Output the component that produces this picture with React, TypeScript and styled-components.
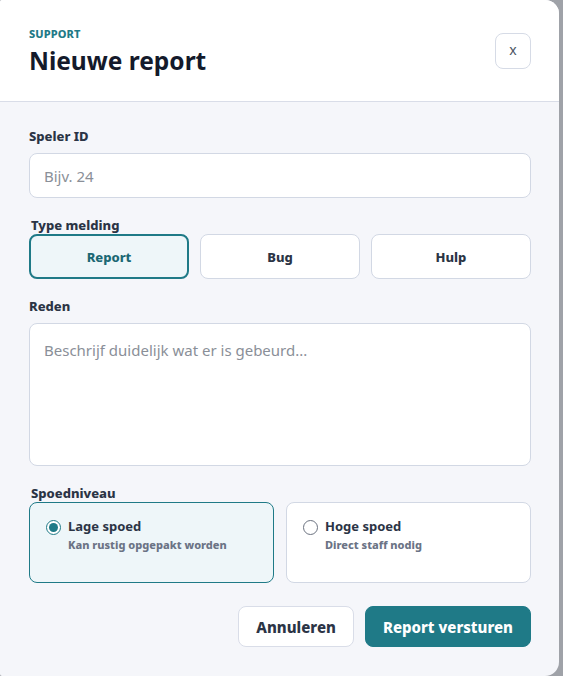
import React, { useState } from "react";
import styled, { createGlobalStyle } from "styled-components";

const Global = createGlobalStyle`
  html, body { margin: 0; padding: 0; background: #9fa2a8; }
  body { font-family: "Noto Sans", "Open Sans", sans-serif; }
  * { box-sizing: border-box; }
`;

const Modal = styled.div`
  width: 559px;
  height: 676px;
  background: #f5f6fa;
  border-radius: 2px 14px 14px 2px;
  overflow: hidden;
  display: flex;
  flex-direction: column;
`;

const Header = styled.header`
  height: 102px;
  background: #ffffff;
  border-bottom: 1px solid #d9dde8;
  padding: 26px 28px 0 29px;
  display: flex;
  justify-content: space-between;
  align-items: flex-start;
`;

const Eyebrow = styled.div`
  font-size: 11px;
  font-weight: 800;
  letter-spacing: 0.1px;
  color: #1f7a87;
  line-height: 16px;
`;

const Title = styled.h1`
  margin: 2px 0 0;
  font-size: 24.5px;
  font-weight: 700;
  color: #141a2b;
  line-height: 34px;
`;

const CloseButton = styled.button`
  margin-top: 7px;
  width: 36px;
  height: 36px;
  border: 1px solid #d6dbe6;
  border-radius: 8px;
  background: #ffffff;
  color: #4b5563;
  font-family: inherit;
  font-size: 14px;
  line-height: 1;
  padding: 0 0 3px;
  cursor: pointer;
`;

const Body = styled.div`
  padding: 25px 28px 0 29px;
  display: flex;
  flex-direction: column;
`;

const Label = styled.label<{ $indent?: boolean; $gap?: number; $top?: number }>`
  display: block;
  font-size: 13px;
  font-weight: 800;
  color: #2b3445;
  line-height: 18px;
  padding-left: ${(p) => (p.$indent ? "2px" : "0")};
  margin-top: ${(p) => p.$top ?? 0}px;
  margin-bottom: ${(p) => p.$gap ?? 8}px;
`;

const Input = styled.input`
  width: 100%;
  height: 45px;
  border: 1px solid #d2d8e4;
  border-radius: 8px;
  background: #ffffff;
  padding: 0 14px;
  font-family: inherit;
  font-size: 15px;
  color: #2b3445;
  outline: none;
  &::placeholder { color: #8a8f98; }
`;

const TextArea = styled.textarea`
  width: 100%;
  height: 143px;
  border: 1px solid #d2d8e4;
  border-radius: 8px;
  background: #ffffff;
  padding: 14px 14px;
  font-family: inherit;
  font-size: 15px;
  line-height: 24px;
  color: #2b3445;
  resize: none;
  outline: none;
  &::placeholder { color: #8a8f98; }
`;

const TypeRow = styled.div`
  display: grid;
  grid-template-columns: repeat(3, 1fr);
  gap: 11px;
`;

const TypeButton = styled.button<{ $active?: boolean }>`
  height: 45px;
  border-radius: 8px;
  border: ${(p) => (p.$active ? "2px solid #1f7a87" : "1px solid #d2d8e4")};
  background: ${(p) => (p.$active ? "#eef6f9" : "#ffffff")};
  color: ${(p) => (p.$active ? "#1b6874" : "#2b3445")};
  font-family: inherit;
  font-size: 13px;
  font-weight: 800;
  cursor: pointer;
`;

const CardRow = styled.div`
  display: grid;
  grid-template-columns: 1fr 1fr;
  gap: 12px;
`;

const Card = styled.div<{ $active?: boolean }>`
  height: 81px;
  border-radius: 8px;
  border: 1px solid ${(p) => (p.$active ? "#1f7a87" : "#d2d8e4")};
  background: ${(p) => (p.$active ? "#eef6f9" : "#ffffff")};
  padding: 13px 16px;
  display: flex;
  gap: 7px;
  align-items: flex-start;
  cursor: pointer;
`;

const Radio = styled.span<{ $checked?: boolean }>`
  margin-top: 4px;
  width: 15px;
  height: 15px;
  border-radius: 50%;
  border: 1px solid ${(p) => (p.$checked ? "#1f7a87" : "#6b7280")};
  background: #ffffff;
  display: flex;
  align-items: center;
  justify-content: center;
  flex-shrink: 0;
  &::after {
    content: "";
    width: 9px;
    height: 9px;
    border-radius: 50%;
    background: ${(p) => (p.$checked ? "#1f7a87" : "transparent")};
  }
`;

const CardTitle = styled.div`
  font-size: 13px;
  font-weight: 700;
  color: #2b3445;
  line-height: 20px;
`;

const CardSub = styled.div`
  font-size: 11px;
  font-weight: 800;
  color: #6b7385;
  line-height: 16px;
  margin-top: 1px;
`;

const Footer = styled.div`
  margin-top: 23px;
  display: flex;
  justify-content: flex-end;
  gap: 11px;
`;

const Button = styled.button<{ $primary?: boolean }>`
  height: 41px;
  padding: 0 17px;
  border-radius: 8px;
  border: 1px solid ${(p) => (p.$primary ? "#1f7a87" : "#d9dde8")};
  background: ${(p) => (p.$primary ? "#1f7a87" : "#ffffff")};
  color: ${(p) => (p.$primary ? "#ffffff" : "#2b3445")};
  font-family: inherit;
  font-size: 15px;
  font-weight: 800;
  cursor: pointer;
`;

const types = ["Report", "Bug", "Hulp"];

export default function App() {
  const [type, setType] = useState("Report");
  const [urgency, setUrgency] = useState("low");
  return (
    <>
      <Global />
      <Modal>
        <Header>
          <div>
            <Eyebrow>SUPPORT</Eyebrow>
            <Title>Nieuwe report</Title>
          </div>
          <CloseButton aria-label="Sluiten">x</CloseButton>
        </Header>
        <Body>
          <Label>Speler ID</Label>
          <Input placeholder="Bijv. 24" />

          <Label $indent $top={18} $gap={0}>Type melding</Label>
          <TypeRow>
            {types.map((t) => (
              <TypeButton key={t} $active={type === t} onClick={() => setType(t)}>
                {t}
              </TypeButton>
            ))}
          </TypeRow>

          <Label $top={18}>Reden</Label>
          <TextArea placeholder="Beschrijf duidelijk wat er is gebeurd..." />

          <Label $indent $top={18} $gap={0}>Spoedniveau</Label>
          <CardRow>
            <Card $active={urgency === "low"} onClick={() => setUrgency("low")}>
              <Radio $checked={urgency === "low"} />
              <div>
                <CardTitle>Lage spoed</CardTitle>
                <CardSub>Kan rustig opgepakt worden</CardSub>
              </div>
            </Card>
            <Card $active={urgency === "high"} onClick={() => setUrgency("high")}>
              <Radio $checked={urgency === "high"} />
              <div>
                <CardTitle>Hoge spoed</CardTitle>
                <CardSub>Direct staff nodig</CardSub>
              </div>
            </Card>
          </CardRow>

          <Footer>
            <Button>Annuleren</Button>
            <Button $primary>Report versturen</Button>
          </Footer>
        </Body>
      </Modal>
    </>
  );
}
